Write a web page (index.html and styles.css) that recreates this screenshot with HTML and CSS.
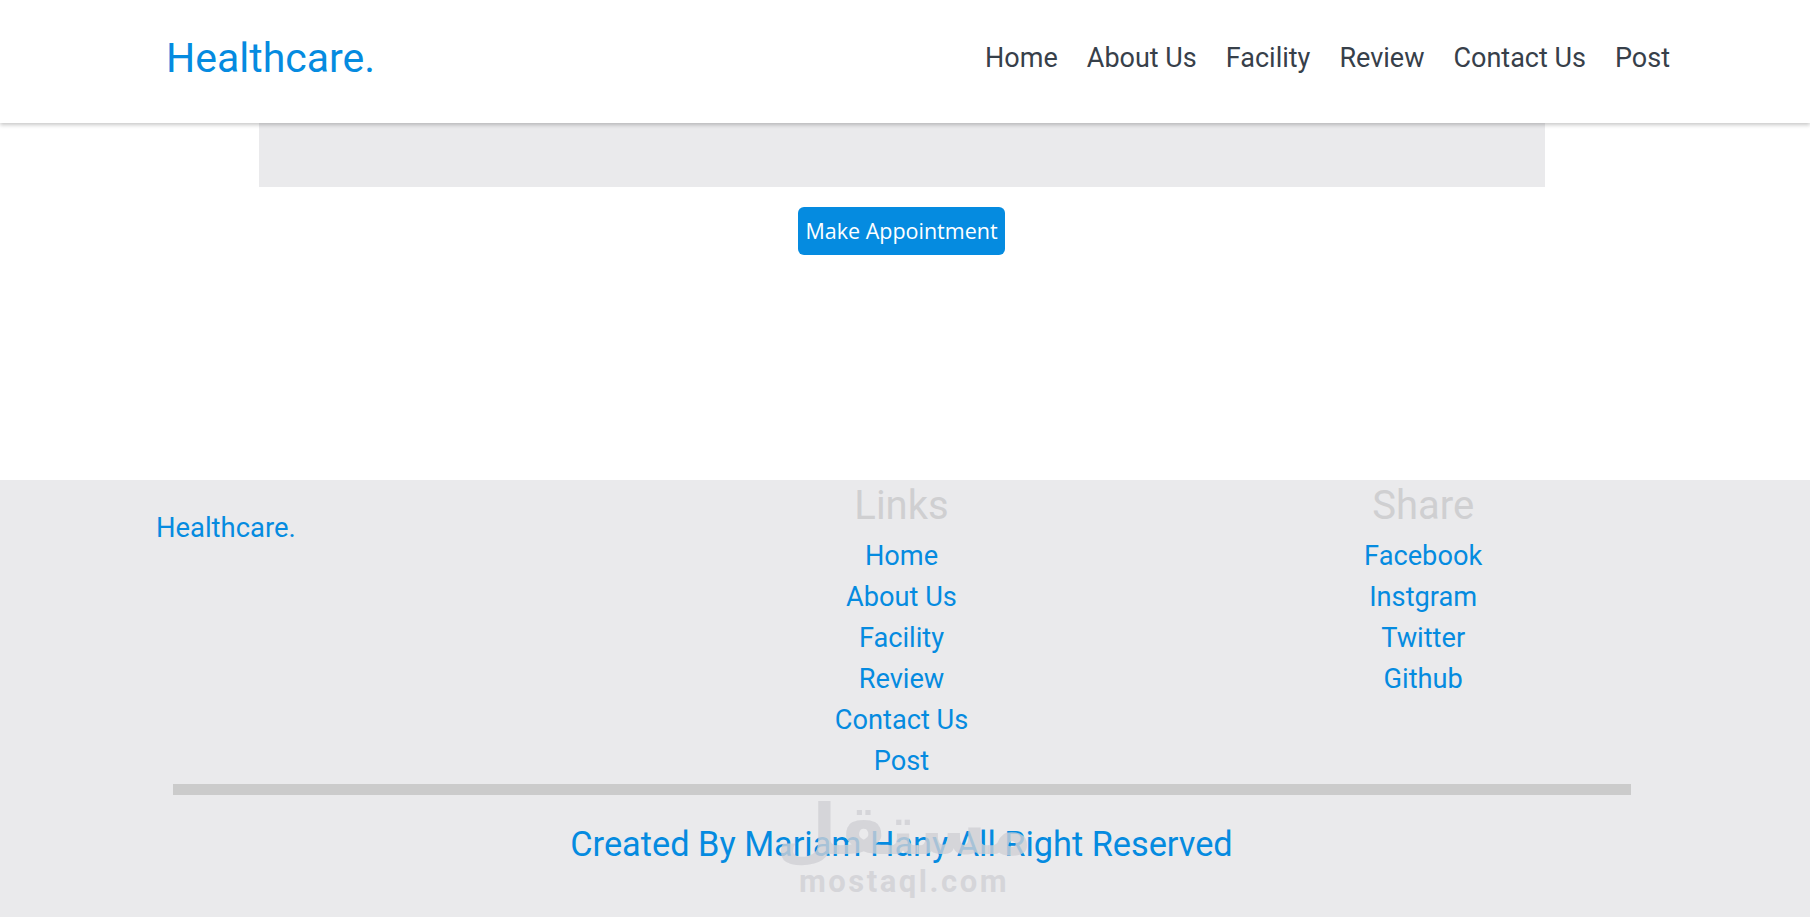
FILE: index.html
```html
<!DOCTYPE html>
<html lang="en">
<head>
  <meta charset="UTF-8" />
  <meta name="viewport" content="width=device-width, initial-scale=1.0" />
  <title>Healthcare</title>
  <link rel="stylesheet" href="styles.css">
</head>
<body>
  <header class="header">
    <a href="#" class="logo">Healthcare.</a>
    <nav class="navbar">
      <a href="#">Home</a>
      <a href="#">About Us</a>
      <a href="#">Facility</a>
      <a href="#">Review</a>
      <a href="#">Contact Us</a>
      <a href="#">Post</a>
    </nav>
  </header>

  <main class="main">
    <div class="banner"></div>
    <button class="btn">Make Appointment</button>
  </main>

  <footer class="footer">
    <div class="footer-cols">
      <div class="footer-brand">
        <a href="#">Healthcare.</a>
      </div>
      <div class="footer-col">
        <h3>Links</h3>
        <a href="#">Home</a>
        <a href="#">About Us</a>
        <a href="#">Facility</a>
        <a href="#">Review</a>
        <a href="#">Contact Us</a>
        <a href="#">Post</a>
      </div>
      <div class="footer-col">
        <h3>Share</h3>
        <a href="#">Facebook</a>
        <a href="#">Instgram</a>
        <a href="#">Twitter</a>
        <a href="#">Github</a>
      </div>
    </div>
    <div class="footer-line"></div>
    <p class="credit">Created By Mariam Hany All Right Reserved</p>

    <div class="watermark">
      <span class="wm-ar">مستقل</span>
      <span class="wm-en">mostaql.com</span>
    </div>
  </footer>
</body>
</html>
```

FILE: styles.css
```css
* {
  box-sizing: border-box;
}

body {
  margin: 0;
  font-family: Roboto, "Liberation Sans", sans-serif;
  background: #fff;
  min-height: 100vh;
  display: flex;
  flex-direction: column;
  overflow: hidden;
}

a {
  text-decoration: none;
}

.header {
  height: 123px;
  display: flex;
  align-items: center;
  justify-content: space-between;
  padding: 0 140px 7px 166px;
  background: #fff;
  box-shadow: 0 2px 4px rgba(0, 0, 0, 0.22);
  position: relative;
  z-index: 10;
}

.logo {
  font-size: 41px;
  color: #058be0;
}

.navbar {
  display: flex;
  gap: 29px;
}

.navbar a {
  font-size: 27px;
  color: #37404a;
}

/* content is centred a few px left of the page middle */
.main {
  flex: 1;
  display: flex;
  flex-direction: column;
  align-items: center;
  padding-right: 7px;
}

.banner {
  width: 1286px;
  height: 64px;
  background: #eaeaec;
}

.btn {
  margin-top: 20px;
  font-family: "Open Sans", sans-serif;
  font-size: 21.5px;
  line-height: 30px;
  color: #fff;
  background: #058be0;
  border: none;
  border-radius: 6px;
  padding: 9px 7px;
  cursor: pointer;
}

.footer {
  background: #eaeaec;
  position: relative;
  padding: 2px 7px 47px 0;
}

.footer-cols {
  display: grid;
  grid-template-columns: repeat(3, 1fr);
  gap: 74px;
  padding: 0 156px;
  margin-bottom: 2px;
}

.footer-brand {
  padding-top: 26px;
}

.footer-brand a {
  font-size: 27.4px;
  line-height: 41px;
  color: #058be0;
}

.footer-col {
  display: flex;
  flex-direction: column;
  align-items: center;
}

.footer-col h3 {
  margin: 0 0 7px;
  font-size: 40px;
  font-weight: 400;
  color: #cfcfd1;
}

.footer-col a {
  font-size: 27.2px;
  line-height: 41px;
  color: #058be0;
}

.footer-line {
  width: 1458px;
  height: 11px;
  margin: 0 auto;
  background: #cbcbcb;
}

.credit {
  margin: 24px 0 0;
  text-align: center;
  font-size: 34.3px;
  line-height: 51px;
  color: #058be0;
}

.watermark {
  position: absolute;
  left: 795px;
  top: 314px;
  width: 218px;
  display: flex;
  flex-direction: column;
  align-items: center;
  color: rgba(208, 208, 212, 0.8);
  pointer-events: none;
}

.wm-ar {
  font-family: "DejaVu Sans", sans-serif;
  font-weight: bold;
  font-size: 70px;
  line-height: 72px;
}

.wm-en {
  font-weight: bold;
  font-size: 31px;
  line-height: 32px;
  letter-spacing: 2.5px;
}
```
